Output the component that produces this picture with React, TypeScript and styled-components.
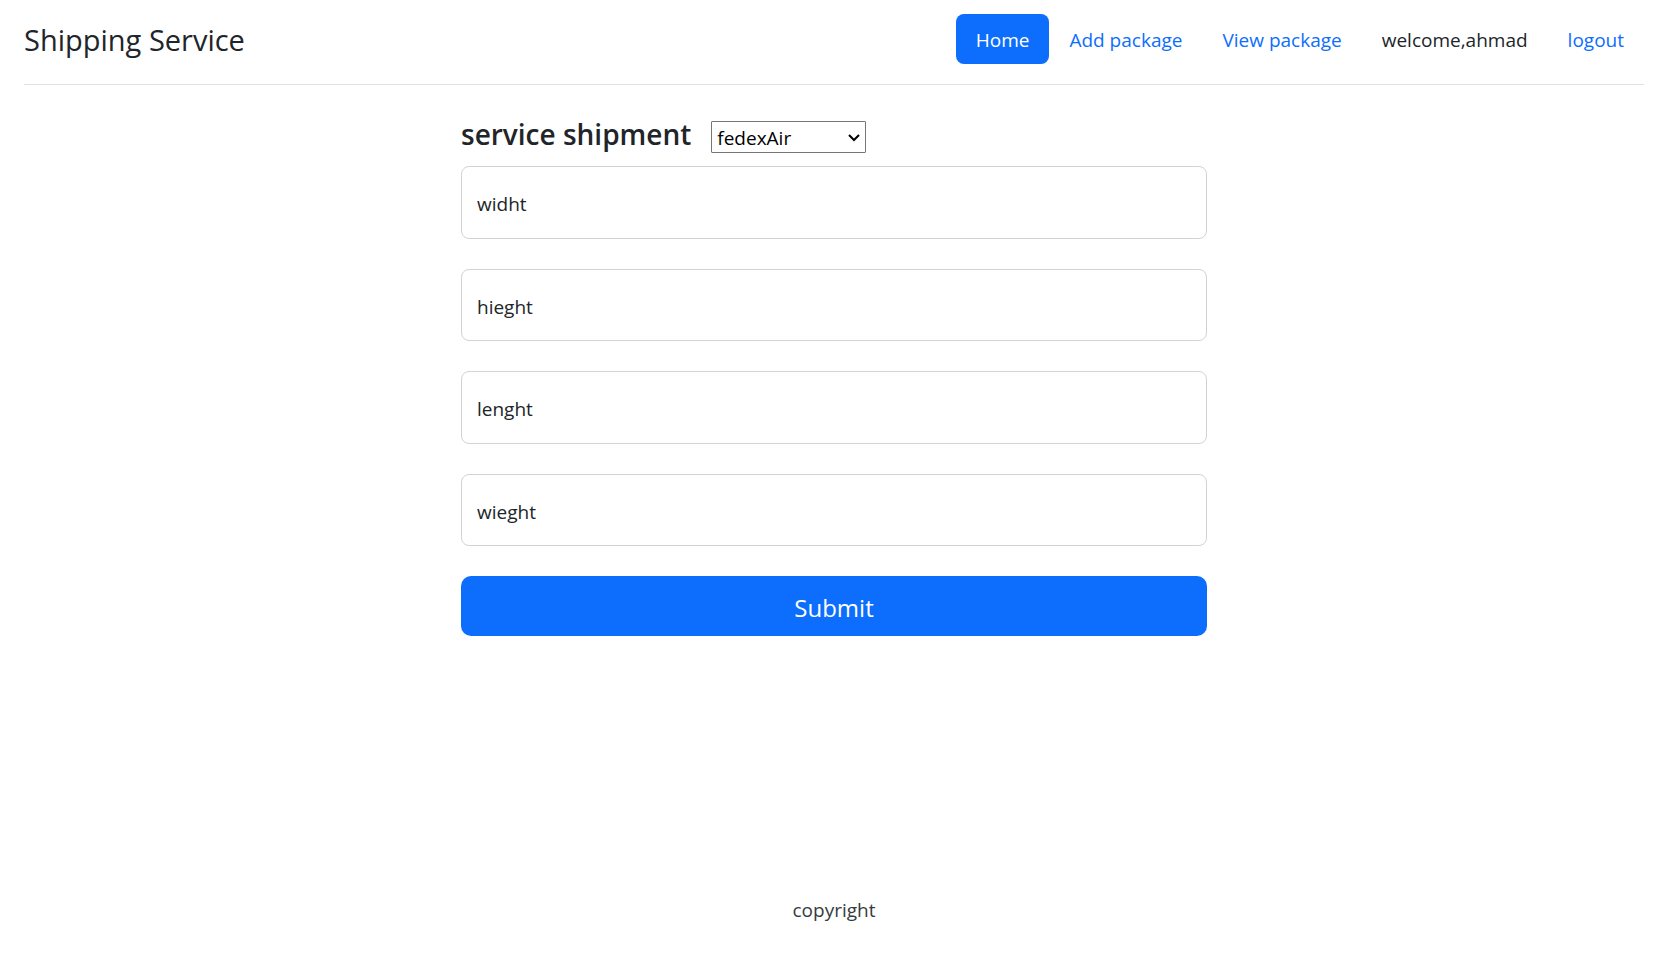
import React from "react";
import styled, { createGlobalStyle } from "styled-components";

const GlobalStyle = createGlobalStyle`
  *, *::before, *::after { box-sizing: border-box; }
  body {
    margin: 0;
    background: #fff;
    color: #212529;
    font-family: "Segoe UI", "Open Sans", "Noto Sans", sans-serif;
    font-size: 19px;
    line-height: 30px;
  }
`;

const Page = styled.div`
  display: flex;
  flex-direction: column;
  min-height: 100vh;
  padding: 14px 18px 36px 24px;
`;

const Header = styled.header`
  display: flex;
  align-items: center;
  justify-content: space-between;
  flex-wrap: wrap;
  padding-bottom: 20px;
  border-bottom: 1px solid #dee2e6;
`;

const Brand = styled.a`
  padding-top: 2px;
  color: #212529;
  font-size: 29px;
  line-height: 40px;
  text-decoration: none;
`;

const Nav = styled.nav`
  display: flex;
  flex-wrap: wrap;
`;

const NavLink = styled.a<{ $active?: boolean }>`
  padding: 11px 20px 9px;
  border-radius: 8px;
  color: ${(p) => (p.$active ? "#fff" : "#0d6efd")};
  background: ${(p) => (p.$active ? "#0d6efd" : "transparent")};
  text-decoration: none;
`;

const NavText = styled.span`
  padding: 11px 20px 9px;
`;

const Main = styled.main`
  width: 100%;
  max-width: 746px;
  margin: 32px auto 0;
`;

const ServiceRow = styled.div`
  display: flex;
  align-items: flex-start;
  gap: 20px;
  height: 49px;
`;

const ServiceLabel = styled.label`
  font-size: 28px;
  font-weight: 600;
  line-height: 34px;
`;

const SelectWrap = styled.div`
  position: relative;
  margin-top: 4px;
`;

const ServiceSelect = styled.select`
  display: block;
  appearance: none;
  width: 155px;
  height: 32px;
  padding: 1px 24px 0 5px;
  border: 1px solid #767676;
  border-radius: 1px;
  background: #fff;
  color: #000;
  font: inherit;
  line-height: 28px;
`;

const Chevron = styled.svg`
  position: absolute;
  top: 13px;
  right: 6px;
  pointer-events: none;
`;

const Fields = styled.div`
  display: grid;
  grid-auto-rows: 1fr;
  gap: 30px;
  min-height: 380px;
  margin-bottom: 30px;
`;

const Field = styled.div`
  position: relative;
`;

const FieldInput = styled.input`
  display: block;
  width: 100%;
  height: 100%;
  padding: 20px 15px;
  border: 1px solid #ced4da;
  border-radius: 8px;
  background: #fff;
  font: inherit;
`;

const FieldLabel = styled.label`
  position: absolute;
  top: 23px;
  left: 16px;
  pointer-events: none;
`;

const SubmitButton = styled.button`
  display: block;
  width: 100%;
  height: 60px;
  padding: 4px 20px 0;
  border: 0;
  border-radius: 10px;
  background: #0d6efd;
  color: #fff;
  font: inherit;
  font-size: 24px;
  cursor: pointer;
`;

const Footer = styled.footer`
  margin-top: auto;
  color: #373b3e;
  text-align: center;
`;

const links = ["Home", "Add package", "View package"];
const fields = ["widht", "hieght", "lenght", "wieght"];

export default function App() {
  return (
    <>
      <GlobalStyle />
      <Page>
        <Header>
          <Brand href="#">Shipping Service</Brand>
          <Nav>
            {links.map((link, i) => (
              <NavLink key={link} href="#" $active={i === 0}>
                {link}
              </NavLink>
            ))}
            <NavText>welcome,ahmad</NavText>
            <NavLink href="#">logout</NavLink>
          </Nav>
        </Header>
        <Main>
          <form onSubmit={(e) => e.preventDefault()}>
            <ServiceRow>
              <ServiceLabel htmlFor="service">service shipment</ServiceLabel>
              <SelectWrap>
                <ServiceSelect id="service" defaultValue="fedexAir">
                  <option>fedexAir</option>
                </ServiceSelect>
                <Chevron width="12" height="8" viewBox="0 0 12 8" aria-hidden="true">
                  <path d="M1 1 L6 6 L11 1" fill="none" stroke="#000" strokeWidth="2" />
                </Chevron>
              </SelectWrap>
            </ServiceRow>
            <Fields>
              {fields.map((name) => (
                <Field key={name}>
                  <FieldInput id={name} name={name} type="text" />
                  <FieldLabel htmlFor={name}>{name}</FieldLabel>
                </Field>
              ))}
            </Fields>
            <SubmitButton type="submit">Submit</SubmitButton>
          </form>
        </Main>
        <Footer>copyright</Footer>
      </Page>
    </>
  );
}
